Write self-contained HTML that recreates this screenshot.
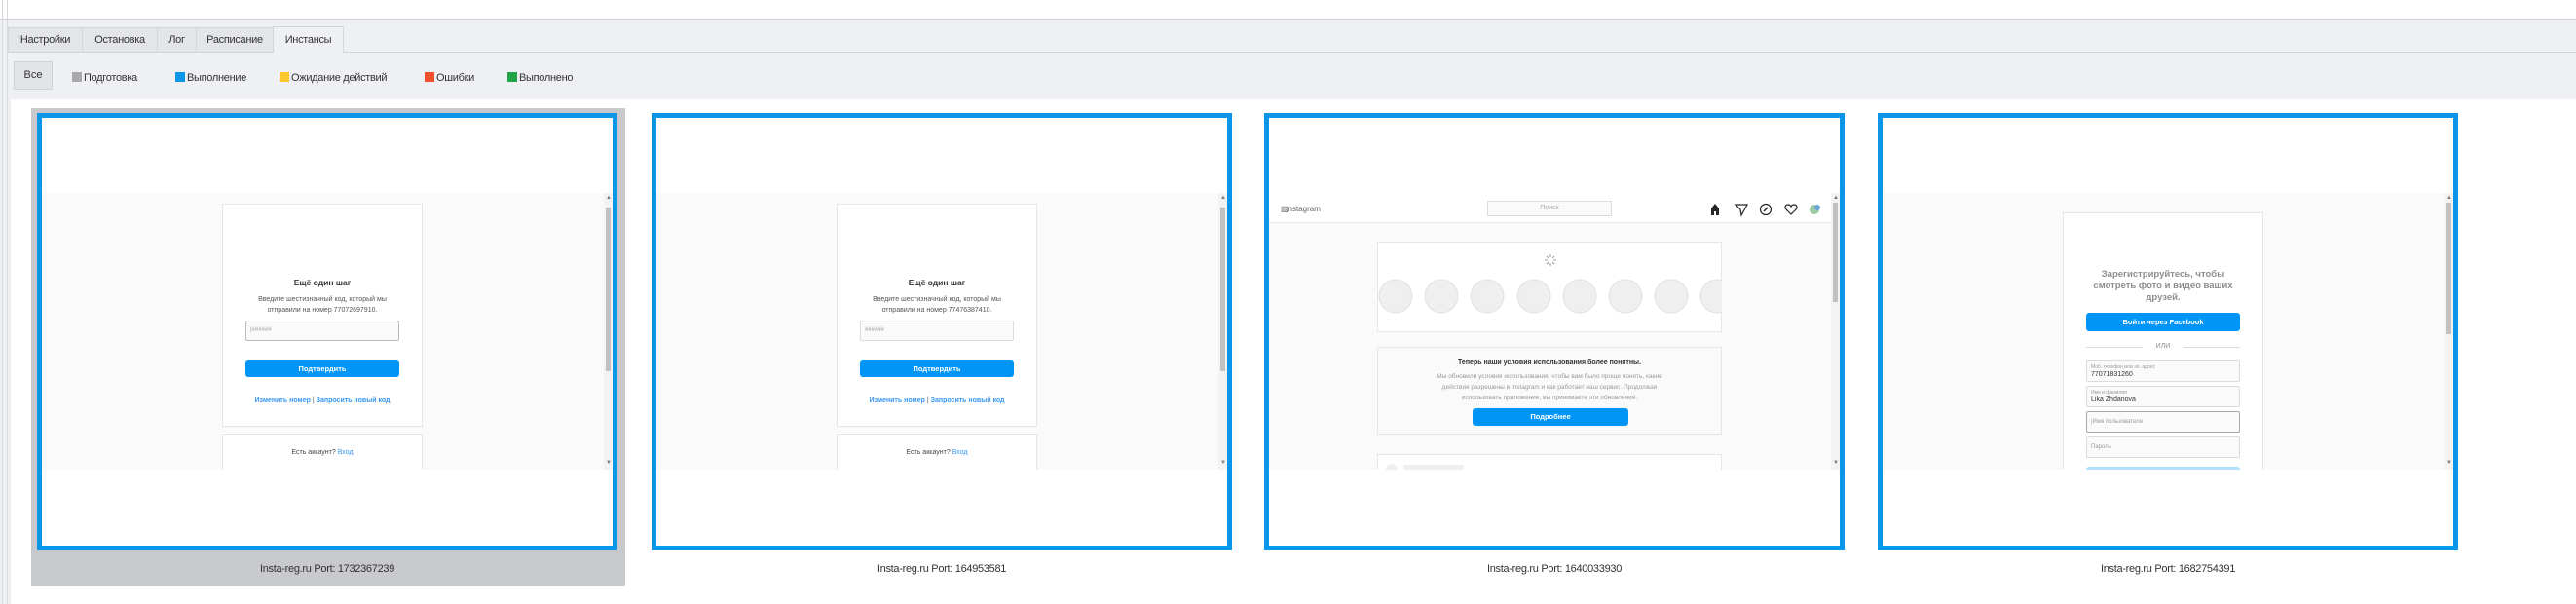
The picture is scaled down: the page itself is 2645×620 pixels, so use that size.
<!DOCTYPE html>
<html><head><meta charset="utf-8"><style>
*{box-sizing:border-box;margin:0;padding:0}
body{width:2645px;height:620px;background:#eff0f4;font-family:"Liberation Sans",sans-serif;position:relative;overflow:hidden;color:#333}
.a{position:absolute}
.tab{position:absolute;top:28px;height:25px;background:#e3e5e8;border:1px solid #d3d5d9;border-bottom:none;font-size:11px;letter-spacing:-0.3px;line-height:24px;text-align:center;color:#333}
.leg{position:absolute;top:74px;font-size:11px;letter-spacing:-0.3px;line-height:12px;color:#333}
.leg i{display:inline-block;width:10px;height:10px;margin-right:2px;vertical-align:-1px}
.frame{position:absolute;top:116px;width:596px;height:449px;border:5px solid #0d95e8;background:#fff}
.frame .in{position:absolute;left:0;top:0;width:586px;height:439px;overflow:hidden}
.page{position:absolute;left:0;top:77px;width:586px;height:284px;background:#fafafa;overflow:hidden}
.sb{position:absolute;right:0;top:0;width:9px;height:284px;background:#f3f3f3}
.sb i{position:absolute;left:2px;width:5px;background:#c1c1c1}
.sb b{position:absolute;left:2px;font-size:6px;color:#777;font-weight:normal}
.card{position:absolute;background:#fff;border:1px solid #e6e6e6}
.c{text-align:center;position:absolute;left:0;right:0}
.btn{position:absolute;background:#0095f6;border-radius:3px;color:#fff;font-weight:bold;font-size:7.5px;text-align:center}
.cap{position:absolute;top:578px;font-size:11px;letter-spacing:-0.3px;text-align:center;width:596px;color:#333}
.inp{position:absolute;background:#fafafa;border:1px solid #dbdbdb;border-radius:2px;font-size:6px;color:#999;padding-left:4px}
</style></head><body>
<div class="a" style="left:0;top:0;width:2645px;height:21px;background:#fff;border-bottom:1px solid #d3d5d9"></div>
<div class="a" style="left:2px;top:0;width:1px;height:620px;background:#d8dae0"></div>
<div class="a" style="left:7px;top:0;width:1px;height:620px;background:#d8dae0"></div>
<div class="a" style="left:8px;top:53px;width:2637px;height:1px;background:#d3d5d9"></div>
<div class="tab" style="left:8px;width:77px">Настройки</div>
<div class="tab" style="left:84px;width:78px">Остановка</div>
<div class="tab" style="left:161px;width:41px">Лог</div>
<div class="tab" style="left:201px;width:80px">Расписание</div>
<div class="tab" style="left:280px;width:73px;top:27px;height:27px;background:#eff0f4;line-height:26px">Инстансы</div>
<div class="a" style="left:14px;top:63px;width:40px;height:29px;background:#e2e4e7;border:1px solid #d0d2d5;font-size:11px;line-height:27px;text-align:center">Все</div>
<div class="leg" style="left:74px"><i style="background:#a9a9ad"></i>Подготовка</div>
<div class="leg" style="left:180px"><i style="background:#0d95e8"></i>Выполнение</div>
<div class="leg" style="left:287px"><i style="background:#fcc72c"></i>Ожидание действий</div>
<div class="leg" style="left:436px"><i style="background:#f0502e"></i>Ошибки</div>
<div class="leg" style="left:521px"><i style="background:#22a34a"></i>Выполнено</div>
<div class="a" style="left:11px;top:102px;width:2634px;height:518px;background:#fff"></div>
<div class="a" style="left:32px;top:111px;width:610px;height:491px;background:#c8c9cc"></div>

<!-- Frame 1 -->
<div class="frame" style="left:38px"><div class="in"><div class="page">
<div class="card" style="left:185px;top:11px;width:206px;height:229px">
<div class="c" style="top:75px;font-size:8.5px;font-weight:bold">Ещё один шаг</div>
<div class="c" style="top:92px;font-size:7px;line-height:11px;color:#555">Введите шестизначный код, который мы<br>отправили на номер 77072697910.</div>
<div class="inp" style="left:23px;top:119px;width:158px;height:21px;line-height:19px;border-color:#bbb">|######</div>
<div class="btn" style="left:23px;top:160px;width:158px;height:17px;line-height:17px">Подтвердить</div>
<div class="c" style="top:198px;font-size:7px;color:#3897f0;font-weight:bold">Изменить номер <span style="color:#555;font-weight:normal">|</span> Запросить новый код</div>
</div>
<div class="card" style="left:185px;top:248px;width:206px;height:60px"><div class="c" style="top:14px;font-size:7px;color:#444">Есть аккаунт? <span style="color:#3897f0">Вход</span></div></div>
<div class="sb"><b style="top:2px">▲</b><i style="top:15px;height:168px"></i><b style="top:274px">▼</b></div>
</div></div></div>
<div class="cap" style="left:38px">Insta-reg.ru Port: 1732367239</div>

<!-- Frame 2 -->
<div class="frame" style="left:669px"><div class="in"><div class="page">
<div class="card" style="left:185px;top:11px;width:206px;height:229px">
<div class="c" style="top:75px;font-size:8.5px;font-weight:bold">Ещё один шаг</div>
<div class="c" style="top:92px;font-size:7px;line-height:11px;color:#555">Введите шестизначный код, который мы<br>отправили на номер 77476387410.</div>
<div class="inp" style="left:23px;top:119px;width:158px;height:21px;line-height:19px">######</div>
<div class="btn" style="left:23px;top:160px;width:158px;height:17px;line-height:17px">Подтвердить</div>
<div class="c" style="top:198px;font-size:7px;color:#3897f0;font-weight:bold">Изменить номер <span style="color:#555;font-weight:normal">|</span> Запросить новый код</div>
</div>
<div class="card" style="left:185px;top:248px;width:206px;height:60px"><div class="c" style="top:14px;font-size:7px;color:#444">Есть аккаунт? <span style="color:#3897f0">Вход</span></div></div>
<div class="sb"><b style="top:2px">▲</b><i style="top:15px;height:168px"></i><b style="top:274px">▼</b></div>
</div></div></div>
<div class="cap" style="left:669px">Insta-reg.ru Port: 164953581</div>

<!-- Frame 3 -->
<div class="frame" style="left:1298px"><div class="in"><div class="page">
<div class="a" style="left:0;top:0;width:577px;height:31px;background:#fff;border-bottom:1px solid #e6e6e6"></div>
<div class="a" style="left:12px;top:12px;font-size:8px;color:#666">▨nstagram</div>
<div class="a" style="left:224px;top:8px;width:128px;height:16px;background:#fafafa;border:1px solid #dbdbdb;font-size:7px;color:#aaa;text-align:center;line-height:14px">Поиск</div>
<svg class="a" style="left:450px;top:9px" width="120" height="16" viewBox="0 0 120 16">
<path d="M4 14V7L8 2L12 7V14H9V10H7V14Z" fill="#262626"/>
<path d="M29 3L41 3L35 14L34 8Z M29 3L34 8" fill="none" stroke="#262626" stroke-width="1.2"/>
<circle cx="60" cy="8" r="5.5" fill="none" stroke="#262626" stroke-width="1.2"/><path d="M58 10L62 6" stroke="#262626" stroke-width="1.5"/>
<path d="M86 13L81 8C79 6 80 3 83 3C85 3 86 5 86 5C86 5 87 3 89 3C92 3 93 6 91 8Z" fill="none" stroke="#262626" stroke-width="1.2"/>
<circle cx="110" cy="8" r="5" fill="#9cc9a0"/><circle cx="113" cy="6" r="3" fill="#6fa7d6"/>
</svg>
<div class="card" style="left:111px;top:50px;width:354px;height:93px">
<svg class="a" style="left:170px;top:11px" width="14" height="14" viewBox="0 0 14 14"><g stroke="#999" stroke-width="1"><path d="M7 1V4M7 10V13M1 7H4M10 7H13M3 3L5 5M9 9L11 11M11 3L9 5M5 9L3 11"/></g></svg>
<svg class="a" style="left:0;top:37px" width="353" height="36"><g fill="#efefef" stroke="#e2e2e2"><circle cx="18" cy="18" r="17"/><circle cx="65" cy="18" r="17"/><circle cx="112" cy="18" r="17"/><circle cx="160" cy="18" r="17"/><circle cx="207" cy="18" r="17"/><circle cx="254" cy="18" r="17"/><circle cx="301" cy="18" r="17"/><circle cx="348" cy="18" r="17"/></g></svg>
</div>
<div class="card" style="left:111px;top:158px;width:354px;height:91px;background:#fafafa">
<div class="c" style="top:12px;font-size:7px;font-weight:bold;color:#333">Теперь наши условия использования более понятны.</div>
<div class="c" style="top:24px;font-size:6.5px;line-height:11px;color:#999">Мы обновили условия использования, чтобы вам было проще понять, какие<br>действия разрешены в Instagram и как работает наш сервис. Продолжая<br>использовать приложение, вы принимаете эти обновления.</div>
<div class="btn" style="left:97px;top:62px;width:160px;height:18px;line-height:18px">Подробнее</div>
</div>
<div class="card" style="left:111px;top:268px;width:354px;height:30px"><div class="a" style="left:8px;top:9px;width:12px;height:12px;border-radius:6px;background:#efefef"></div><div class="a" style="left:26px;top:10px;width:62px;height:5px;background:#efefef"></div></div>
<div class="sb"><b style="top:2px">▲</b><i style="top:10px;height:102px"></i><b style="top:274px">▼</b></div>
</div></div></div>
<div class="cap" style="left:1298px">Insta-reg.ru Port: 1640033930</div>

<!-- Frame 4 -->
<div class="frame" style="left:1928px"><div class="in"><div class="page">
<div class="card" style="left:185px;top:20px;width:206px;height:280px">
<div class="c" style="top:57px;font-size:9.5px;line-height:12px;color:#8e8e8e;font-weight:bold">Зарегистрируйтесь, чтобы<br>смотреть фото и видео ваших<br>друзей.</div>
<div class="btn" style="left:23px;top:102px;width:158px;height:19px;line-height:19px">Войти через Facebook</div>
<div class="a" style="left:23px;top:137px;width:58px;height:1px;background:#dbdbdb"></div>
<div class="a" style="left:123px;top:137px;width:58px;height:1px;background:#dbdbdb"></div>
<div class="c" style="top:133px;font-size:7px;color:#8e8e8e">ИЛИ</div>
<div class="inp" style="left:23px;top:151px;width:158px;height:22px;font-size:5px;line-height:7px;padding-top:3px">Моб. телефон или эл. адрес<br><span style="font-size:7px;color:#333">77071831260</span></div>
<div class="inp" style="left:23px;top:177px;width:158px;height:22px;font-size:5px;line-height:7px;padding-top:3px">Имя и фамилия<br><span style="font-size:7px;color:#333">Lika Zhdanova</span></div>
<div class="inp" style="left:23px;top:203px;width:158px;height:22px;line-height:20px;border-color:#aaa">|Имя пользователя</div>
<div class="inp" style="left:23px;top:229px;width:158px;height:22px;line-height:20px">Пароль</div>
<div class="a" style="left:23px;top:260px;width:158px;height:10px;background:#b2dffc;border-radius:3px"></div>
</div>
<div class="sb"><b style="top:2px">▲</b><i style="top:10px;height:135px"></i><b style="top:274px">▼</b></div>
</div></div></div>
<div class="cap" style="left:1928px">Insta-reg.ru Port: 1682754391</div>
</body></html>
